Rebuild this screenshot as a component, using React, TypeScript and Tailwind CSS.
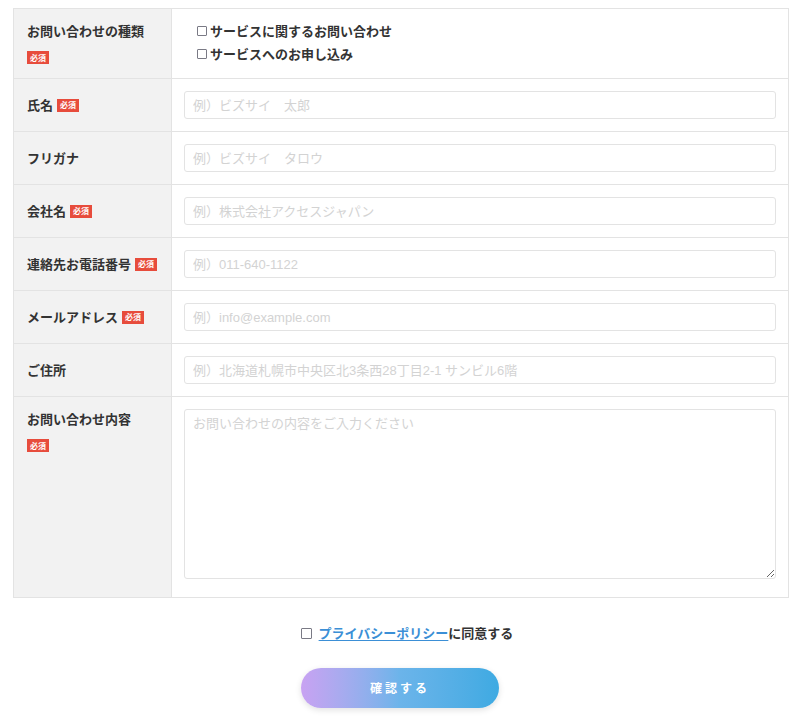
import React from "react"

const font = { fontFamily: '"Noto Sans CJK JP", "Noto Sans", sans-serif' }
const inputFont = { fontFamily: '"Liberation Sans", "Noto Sans CJK JP", sans-serif' }

function Badge({ block }: { block?: boolean }) {
	return (
		<span
			className={`${block ? "mt-[10px]" : "ml-[4px]"} inline-flex h-[13px] items-center bg-[#e74c3c] px-[3px] text-[8px] font-bold leading-none text-white`}
		>
			必須
		</span>
	)
}

function Row({
	label,
	required,
	stacked,
	children,
	last,
}: {
	label: string
	required?: boolean
	stacked?: boolean
	children: React.ReactNode
	last?: boolean
}) {
	return (
		<div className={`flex ${last ? "" : "border-b border-[#e3e3e3]"}`}>
			<div className="w-[158px] shrink-0 border-r border-[#e3e3e3] bg-[#f2f2f2] px-[13px] py-[12px]">
				{stacked ? (
					<div className="flex flex-col items-start">
						<span className="text-[13px] font-bold leading-[20px] text-[#333]">{label}</span>
						{required && <Badge block />}
					</div>
				) : (
					<div className="flex h-[28px] items-center">
						<span className="text-[13px] font-bold leading-[20px] text-[#333]">{label}</span>
						{required && <Badge />}
					</div>
				)}
			</div>
			<div className={`flex-1 px-[12px] ${last ? "pt-[12px] pb-[18px]" : "py-[12px]"}`}>{children}</div>
		</div>
	)
}

function TextInput({ placeholder }: { placeholder: string }) {
	return (
		<input
			type="text"
			placeholder={placeholder}
			style={inputFont}
			className="block h-[28px] w-full rounded-[3px] border border-[#e3e3e3] bg-white px-[8px] text-[13px] text-[#333] outline-none placeholder:text-[#d3d3d3]"
		/>
	)
}

function Box() {
	return <span className="inline-block h-[10px] w-[10px] rounded-[1px] border border-[#7a7a85] bg-white" />
}

export default function App() {
	return (
		<div className="min-h-[719px] bg-white pt-[8px]" style={font}>
			<div className="mx-[13px] w-[776px] border border-[#e3e3e3]">
				<div className="flex border-b border-[#e3e3e3]">
					<div className="h-[69px] w-[158px] shrink-0 border-r border-[#e3e3e3] bg-[#f2f2f2] px-[13px] pt-[12px]">
						<div className="flex flex-col items-start">
							<span className="text-[13px] font-bold leading-[20px] text-[#333]">お問い合わせの種類</span>
							<Badge block />
						</div>
					</div>
					<div className="flex flex-1 flex-col gap-[3px] px-[25px] pt-[12px]">
						<label className="flex items-center gap-[3px] text-[13px] font-bold leading-[20px] text-[#333]">
							<Box />
							サービスに関するお問い合わせ
						</label>
						<label className="flex items-center gap-[3px] text-[13px] font-bold leading-[20px] text-[#333]">
							<Box />
							サービスへのお申し込み
						</label>
					</div>
				</div>

				<Row label="氏名" required>
					<TextInput placeholder="例）ビズサイ　太郎" />
				</Row>
				<Row label="フリガナ">
					<TextInput placeholder="例）ビズサイ　タロウ" />
				</Row>
				<Row label="会社名" required>
					<TextInput placeholder="例）株式会社アクセスジャパン" />
				</Row>
				<Row label="連絡先お電話番号" required>
					<TextInput placeholder="例）011-640-1122" />
				</Row>
				<Row label="メールアドレス" required>
					<TextInput placeholder="例）info@example.com" />
				</Row>
				<Row label="ご住所">
					<TextInput placeholder="例）北海道札幌市中央区北3条西28丁目2-1 サンビル6階" />
				</Row>
				<Row label="お問い合わせ内容" required stacked last>
					<textarea
						placeholder="お問い合わせの内容をご入力ください"
						style={inputFont}
						className="block h-[170px] w-full rounded-[3px] border border-[#e3e3e3] bg-white px-[8px] py-[4px] text-[13px] text-[#333] outline-none placeholder:text-[#d3d3d3]"
					/>
				</Row>
			</div>

			<div className="mt-[25px] flex items-center justify-center pl-[14px]">
				<span className="mr-[7px] inline-block h-[11px] w-[11px] rounded-[1px] border border-[#7a7a85] bg-white" />
				<span className="text-[13px] font-bold leading-[20px] text-[#333]">
					<a className="text-[#3b8fd6] underline underline-offset-2">プライバシーポリシー</a>
					に同意する
				</span>
			</div>

			<div className="mt-[25px] flex justify-center">
				<button className="h-[40px] w-[198px] rounded-full bg-gradient-to-r from-[#c8a2f2] via-[#6bb4ea] to-[#3eaae2] text-[12px] font-bold tracking-[3px] text-white shadow-[0_2px_6px_rgba(0,0,0,0.12)]">
					確認する
				</button>
			</div>
		</div>
	)
}
